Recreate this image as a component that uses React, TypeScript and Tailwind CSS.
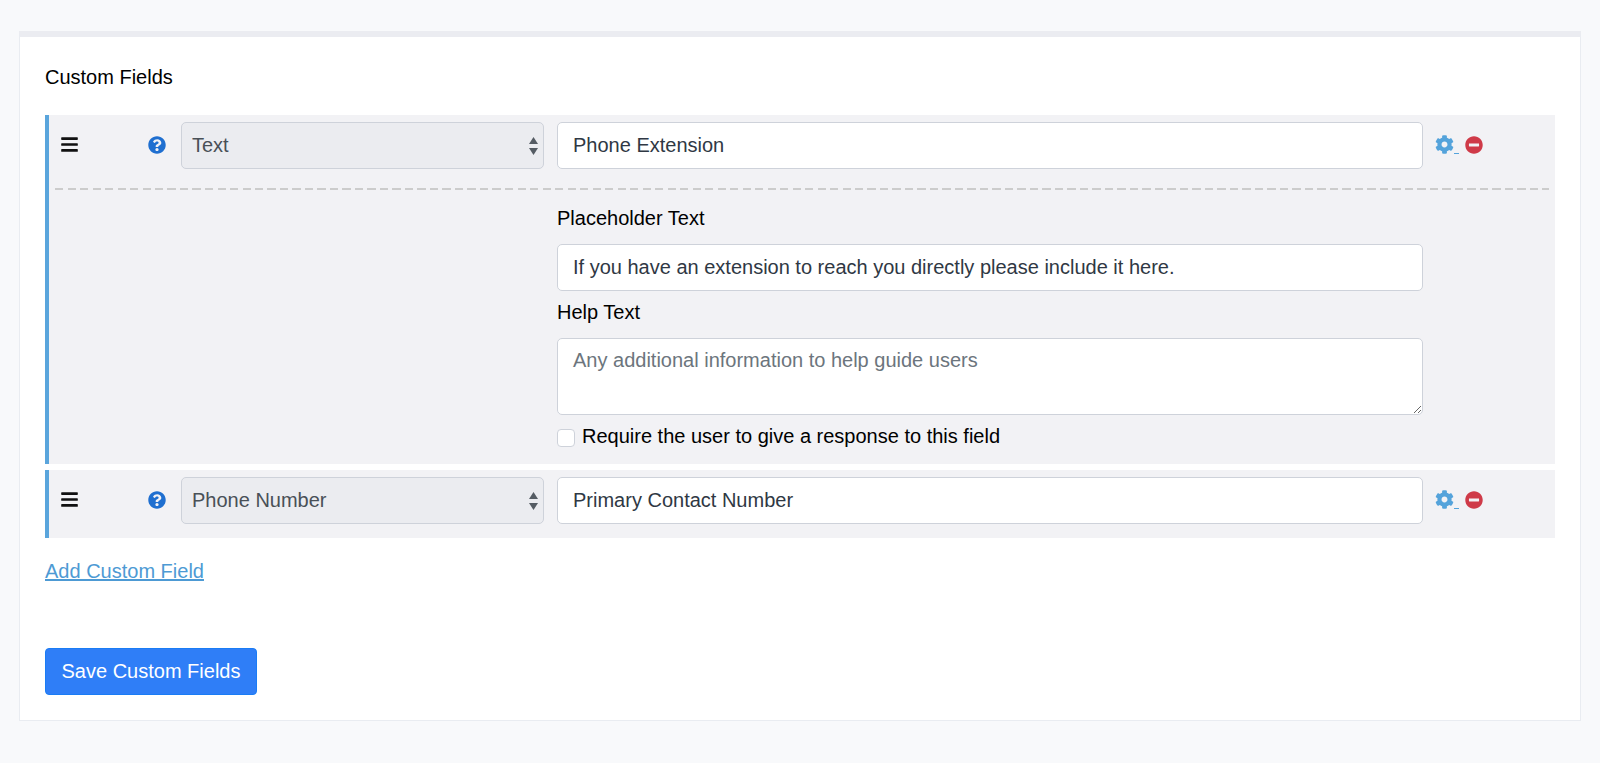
import { FaBars, FaCog, FaMinusCircle, FaQuestionCircle } from 'react-icons/fa';

const fieldClass =
  'w-full h-[47px] rounded-[5px] border border-[#ced2da] bg-white px-[15px] text-[20px] text-[#2f3844] outline-none';

function FieldRow({ type, name }: { type: string; name: string }) {
  return (
    <div className="flex items-center h-[47px]">
      <div className="w-[18px] ml-[11px] pb-[2px] text-[#111]">
        <FaBars size={19} />
      </div>
      <div className="ml-[70px] w-[18px] pb-[2px] text-[#1f6fd0]">
        <FaQuestionCircle size={18} />
      </div>
      <div className="relative ml-[15px] w-[363px]">
        <select
          defaultValue={type}
          className="w-full h-[47px] appearance-none rounded-[5px] border border-[#ced2da] bg-[#ebecf0] px-[10px] pb-[2px] text-[20px] text-[#495057] outline-none"
        >
          <option>{type}</option>
        </select>
        <svg
          className="absolute right-[6px] top-[15px] pointer-events-none"
          width="9"
          height="18"
          viewBox="0 0 9 18"
          fill="#555c64"
        >
          <path d="M4.5 0 L9 7 L0 7 Z" />
          <path d="M0 11 L9 11 L4.5 18 Z" />
        </svg>
      </div>
      <div className="ml-[13px] w-[866px]">
        <input className={fieldClass} defaultValue={name} />
      </div>
      <div className="ml-[12px] pb-[2px] flex items-center text-[#54a3db]">
        <FaCog size={19} />
        <span className="w-[5px] h-px bg-[#54a3db] mt-[17px]" />
        <FaMinusCircle size={18} className="ml-[6px] text-[#cf3a48]" />
      </div>
    </div>
  );
}

export default function App() {
  return (
    <div
      className="min-h-[763px] bg-[#f8f9fb] pt-[31px] px-[19px] text-[20px] text-black"
      style={{ fontFamily: '"Liberation Sans", Arial, sans-serif' }}
    >
      <div className="w-[1562px] h-[690px] bg-white border border-[#e9ecf1] border-t-[6px] border-t-[#ebecf1] px-[25px] pt-[25px]">
        <h3 className="text-[20px] leading-[30px] font-normal">Custom Fields</h3>

        <div className="mt-[23px] w-[1510px] border-l-4 border-[#5aa5dc] bg-[#f2f2f5] h-[349px] pt-[7px]">
          <FieldRow type="Text" name="Phone Extension" />
          <div className="ml-[6px] mr-[6px] mt-[19px] h-[2px] bg-[repeating-linear-gradient(90deg,#cccccc_0,#cccccc_8px,transparent_8px,transparent_12.5px)]" />
          <div className="ml-[508px] w-[866px]">
            <label className="block mt-[13px] leading-[30px]">Placeholder Text</label>
            <input
              className={fieldClass + ' block mt-[11px]'}
              defaultValue="If you have an extension to reach you directly please include it here."
            />
            <label className="block mt-[6px] leading-[30px]">Help Text</label>
            <textarea
              className={fieldClass + ' block mt-[11px] !h-[77px] py-[6px] leading-[30px] placeholder:text-[#6c757d]'}
              placeholder="Any additional information to help guide users"
            />
            <div className="flex items-center mt-[12px]">
              <input
                type="checkbox"
                className="appearance-none w-[18px] h-[18px] rounded-[4px] border border-[#ced2da] bg-white"
              />
              <span className="ml-[7px] pb-[4px] leading-[18px]">Require the user to give a response to this field</span>
            </div>
          </div>
        </div>

        <div className="mt-[6px] w-[1510px] border-l-4 border-[#5aa5dc] bg-[#f2f2f5] h-[68px] pt-[7px]">
          <FieldRow type="Phone Number" name="Primary Contact Number" />
        </div>

        <a href="#" className="inline-block mt-[18px] leading-[30px] text-[#4d9ad4] underline">
          Add Custom Field
        </a>

        <div className="mt-[62px]">
          <button className="w-[212px] h-[47px] rounded-[4px] border border-[#1a7cf5] bg-[#2f7ef7] pb-[2px] text-white text-[20px]">
            Save Custom Fields
          </button>
        </div>
      </div>
    </div>
  );
}
